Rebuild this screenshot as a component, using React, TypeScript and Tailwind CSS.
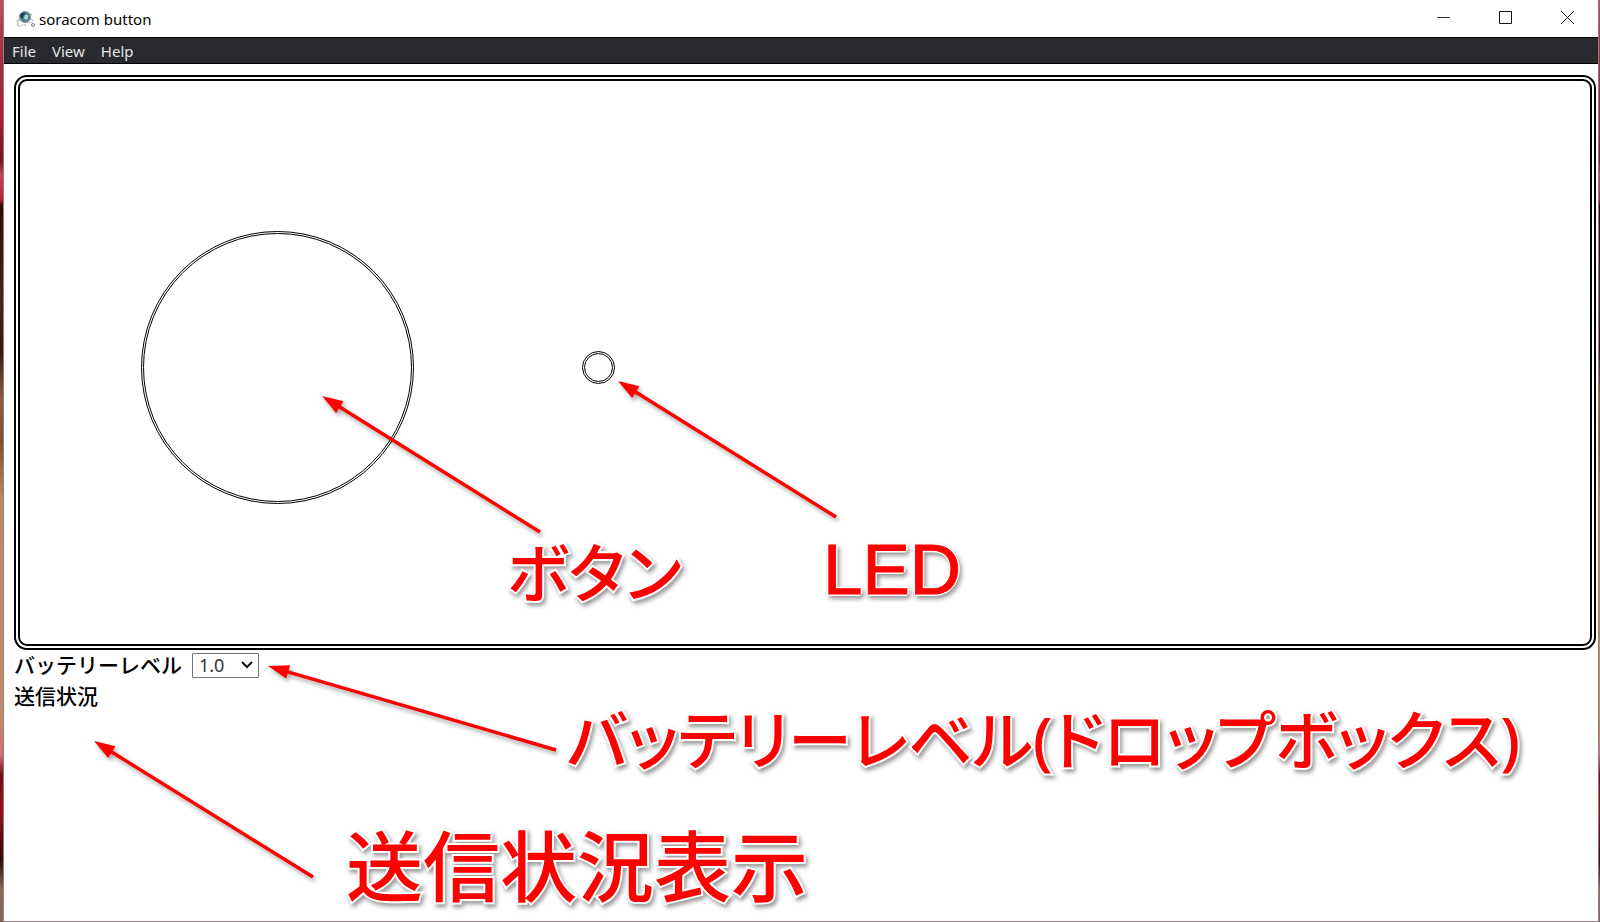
import React from "react";

type Point = { x: number; y: number };

const menus = ["File", "View", "Help"];
const levels = ["1.0", "0.75", "0.5", "0.25"];

const arrows: { tip: Point; tail: Point }[] = [
  { tip: { x: 322, y: 396 }, tail: { x: 540, y: 532 } },
  { tip: { x: 618, y: 381 }, tail: { x: 836, y: 517 } },
  { tip: { x: 268, y: 666 }, tail: { x: 556, y: 750 } },
  { tip: { x: 94, y: 741 }, tail: { x: 313, y: 877 } },
];

function Arrow({ tip, tail }: { tip: Point; tail: Point }) {
  const dx = tail.x - tip.x;
  const dy = tail.y - tip.y;
  const length = Math.hypot(dx, dy);
  const angle = (Math.atan2(dy, dx) * 180) / Math.PI;
  return (
    <g transform={`translate(${tip.x} ${tip.y}) rotate(${angle})`}>
      <path d={`M18 0H${length}`} stroke="#ff0000" strokeWidth="3.4" />
      <path d="M0 0L21 -7V7Z" fill="#ff0000" />
    </g>
  );
}

function AppIcon() {
  return (
    <svg className="h-5 w-6 shrink-0" viewBox="0 0 24 20" fill="none" aria-hidden="true">
      <g stroke="#a0a0a0" strokeWidth="1" strokeDasharray="2 1">
        <path d="M8 11C3 10 5 14 6 13M7 12C4 12 5 15 7 15C4 15 5 18 8 17C11 16 12 15 15 17" />
        <path d="M16 6C18 3 21 5 19 7C17 9 16 10 17 11C20 9 22 11 20 13C18 14 15 12 16 14" />
      </g>
      <circle cx="13" cy="8" r="5.500" fill="#4b8591" stroke="#8a9195" />
      <path d="M8 6C9 3 12 3 14 4C12 6 11 6 11 9C10 10 8 8 8 6Z" fill="#27424d" />
      <path d="M13 6L16 6L16 9L14 11L12 9Z" fill="#a6e0e4" />
      <circle cx="21" cy="16" r="1.500" stroke="#777" />
    </svg>
  );
}

function TitleBar() {
  return (
    <header className="flex h-[37px] bg-white pl-2 text-black">
      <div className="flex flex-1 items-center">
        <AppIcon />
        <h1 className="pl-[3px] text-[15px] leading-5">soracom button</h1>
      </div>
      <button aria-label="Minimize" className="flex h-[35px] w-[63px] items-center justify-center">
        <svg width="13" height="13" viewBox="0 0 13 13" stroke="#333" fill="none"><path d="M0 6.500H13" /></svg>
      </button>
      <button aria-label="Maximize" className="flex h-[35px] w-[61px] items-center justify-center">
        <svg width="13" height="13" viewBox="0 0 13 13" stroke="#111" fill="none"><path d="M.5 .5H12.500V12.500H.5Z" /></svg>
      </button>
      <button aria-label="Close" className="flex h-[35px] w-[62px] items-center justify-center">
        <svg width="13" height="13" viewBox="0 0 13 13" stroke="#222" fill="none"><path d="M0 0L13 13M13 0L0 13" /></svg>
      </button>
    </header>
  );
}

const outlined = "[-webkit-text-stroke:4px_white] [paint-order:stroke_fill] [font-feature-settings:'palt']";

function Note({ className, children }: { className: string; children: React.ReactNode }) {
  return (
    <p
      className={
        "absolute whitespace-nowrap font-medium leading-none text-[#ff0000] [filter:drop-shadow(2px_3px_2px_rgba(0,0,0,0.4))] " +
        className
      }
    >
      {children}
    </p>
  );
}

export default function App() {
  return (
    <div className="relative flex min-h-screen overflow-hidden bg-[linear-gradient(to_bottom,#c44a5c_0px,#a82c40_60px,#b01838_120px,#7a1020_160px,#d0405a_175px,#c02038_199px,#2a0c08_206px,#4a2415_300px,#3a1410_350px,#8a6040_400px,#7a5030_440px,#b98a66_500px,#c08a68_720px,#d86a78_755px,#7a0a10_775px,#a00c18_810px,#300808_860px,#8a6a58_890px,#806860_922px)] pl-[3px] pr-px font-['Noto_Sans','Noto_Sans_CJK_JP',sans-serif]">
      <div className="flex min-w-0 flex-1 flex-col border-x border-b border-[#8a7f82] bg-white">
        <TitleBar />
        <nav className="flex h-[27px] items-center gap-4 border-y border-black bg-[#292a2d] pl-2 text-[15px] leading-5 text-[#e4e6e8]">
          {menus.map((menu) => (
            <button key={menu}>{menu}</button>
          ))}
        </nav>
        <main className="flex-1 pl-[10px] pr-[2px] pt-[11px] text-black">
          <section className="flex h-[575px] items-center gap-[168px] rounded-[13px] border-[6px] border-double border-black pl-[121px] pt-[9px]">
            <button aria-label="ボタン" className="size-[273px] rounded-full border-[3px] border-double border-black" />
            <span role="img" aria-label="LED" className="size-[33px] rounded-full border-[3px] border-double border-black" />
          </section>
          <div className="flex h-[30px] items-center gap-[10px]">
            <label htmlFor="level" className="text-[21px] font-medium leading-[30px]">
              バッテリーレベル
            </label>
            <span className="relative flex">
              <select
                id="level"
                defaultValue="1.0"
                className="h-[25px] w-[67px] appearance-none rounded-[1px] border border-[#767676] bg-white pl-[6px] text-[18px] leading-5 text-[#333]"
              >
                {levels.map((level) => (
                  <option key={level}>{level}</option>
                ))}
              </select>
              <svg className="pointer-events-none absolute right-[6px] top-[8px]" width="12" height="8" viewBox="0 0 12 8" fill="none" stroke="#111" strokeWidth="2">
                <path d="M1 1L6 6L11 1" />
              </svg>
            </span>
          </div>
          <h2 className="text-[21px] font-medium leading-8">送信状況</h2>
        </main>
      </div>

      <svg className="pointer-events-none absolute left-0 top-0 h-[922px] w-[1600px] [filter:drop-shadow(2px_3px_2px_rgba(0,0,0,0.35))]" viewBox="0 0 1600 922" aria-hidden="true">
        {arrows.map((arrow) => (
          <Arrow key={arrow.tip.x} tip={arrow.tip} tail={arrow.tail} />
        ))}
      </svg>
      <Note className={`left-[507px] top-[541px] text-[64px] ${outlined}`}>ボタン</Note>
      <Note className="left-[823px] top-[534px] font-['Liberation_Sans',sans-serif] text-[71px] [-webkit-text-stroke:1px_#ff0000] [text-shadow:2px_0_white,-2px_0_white,0_2px_white,0_-2px_white,1px_1px_white,-1px_-1px_white,1px_-1px_white,-1px_1px_white]">
        LED
      </Note>
      <Note className={`left-[567px] top-[708px] text-[64px] ${outlined}`}>バッテリーレベル(ドロップボックス)</Note>
      <Note className={`left-[346px] top-[828px] text-[77px] ${outlined}`}>送信状況表示</Note>
    </div>
  );
}
